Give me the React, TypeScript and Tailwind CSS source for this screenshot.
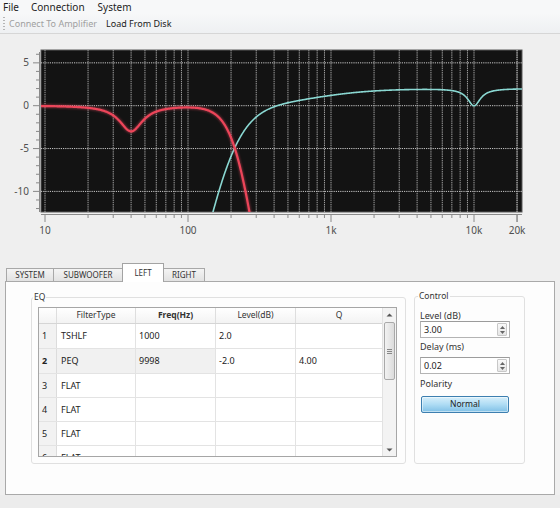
import React from 'react';

const fx = (f: number) => 45 + 143 * (Math.log10(f) - 1);
const OFF = 34;
const fy = (db: number) => 105.7 - 8.57 * db - OFF;

const peq = (f: number, f0: number, g: number, q: number) => {
  const r = f / f0 - f0 / f;
  return g / (1 + q * q * r * r);
};

const redDb = (f: number) => -20 * Math.log10(1 + Math.pow(f / 222, 6)) + peq(f, 40, -3, 2.2);
const cyanDb = (f: number) => {
  const w = f / 800;
  return -20 * Math.log10(1 + Math.pow(200 / f, 4)) + (2 * w * w) / (1 + w * w) + peq(f, 9998, -2, 4);
};

const makePath = (fn: (f: number) => number) => {
  const pts: string[] = [];
  for (let x = 41; x <= 522; x += 0.5) {
    const f = Math.pow(10, (x - 45) / 143 + 1);
    let y = fy(fn(f));
    if (y > 200) y = 200;
    pts.push(`${x.toFixed(1)},${y.toFixed(2)}`);
  }
  return 'M' + pts.join(' L');
};

function Chart() {
  const freqs: number[] = [];
  [10, 100, 1000, 10000].forEach((d) => {
    for (let m = 1; m <= 9; m++) {
      const f = m * d;
      if (f <= 20000) freqs.push(f);
    }
  });
  freqs.push(20000);
  const majors = [10, 100, 1000, 10000, 20000];
  const labels: [number, string][] = [
    [10, '10'],
    [100, '100'],
    [1000, '1k'],
    [10000, '10k'],
    [20000, '20k'],
  ];
  const ydb: number[] = [];
  for (let d = 6; d >= -12; d--) ydb.push(d);
  const top = 50 - OFF;
  const bottom = 212 - OFF;
  return (
    <svg width={560} height={229} className="block" style={{ fontFamily: "'Noto Sans', sans-serif" }}>
      <defs>
        <clipPath id="plot">
          <rect x={41} y={top} width={481} height={bottom - top} />
        </clipPath>
        <filter id="glow" x="-5%" y="-5%" width="110%" height="110%">
          <feGaussianBlur stdDeviation="0.8" />
        </filter>
      </defs>
      <rect x={41} y={top} width={481} height={bottom - top} fill="#131313" stroke="#5a5a5a" strokeWidth={1} />
      <g clipPath="url(#plot)">
        {freqs.map((f) => (
          <line
            key={f}
            x1={fx(f)}
            x2={fx(f)}
            y1={top}
            y2={bottom}
            stroke="#a2a2a2"
            strokeWidth={1}
            strokeDasharray="1.4 0.8"
          />
        ))}
        {[5, 0, -5, -10].map((d) => (
          <line key={d} x1={41} x2={522} y1={fy(d)} y2={fy(d)} stroke="#c8c8c8" strokeWidth={1} strokeDasharray="1.2 1" />
        ))}
        <path d={makePath(cyanDb)} fill="none" stroke="#8ad8d2" strokeWidth={1.6} />
        <path d={makePath(redDb)} fill="none" stroke="#ff5068" strokeWidth={3.6} opacity={0.4} filter="url(#glow)" />
        <path d={makePath(redDb)} fill="none" stroke="#ec4559" strokeWidth={2.2} />
      </g>
      {/* left axis */}
      <line x1={39.5} x2={39.5} y1={top + 2} y2={bottom} stroke="#888" strokeWidth={1} />
      {ydb.map((d) => (
        <line
          key={d}
          x1={d % 5 === 0 ? 33 : 36}
          x2={39.5}
          y1={fy(d)}
          y2={fy(d)}
          stroke="#888"
          strokeWidth={1}
        />
      ))}
      {[5, 0, -5, -10].map((d) => (
        <text key={d} x={29} y={fy(d) + 3.5} textAnchor="end" fontSize={10} fill="#505050">
          {d}
        </text>
      ))}
      {/* bottom axis */}
      <line x1={41} x2={522} y1={214.5 - OFF} y2={214.5 - OFF} stroke="#8a8a8a" strokeWidth={1} />
      {freqs.map((f) => (
        <line
          key={'t' + f}
          x1={fx(f)}
          x2={fx(f)}
          y1={214.5 - OFF}
          y2={(majors.includes(f) ? 222 : 218) - OFF}
          stroke="#8a8a8a"
          strokeWidth={1}
        />
      ))}
      {labels.map(([f, l]) => (
        <text key={l} x={fx(f)} y={233.5 - OFF} textAnchor="middle" fontSize={10} fill="#505050">
          {l}
        </text>
      ))}
    </svg>
  );
}

function Tab({ label, w, selected }: { label: string; w: string; selected?: boolean }) {
  if (selected) {
    return (
      <div
        className={`${w} relative z-10 -mb-px h-[19px] -ml-px border border-b-0 border-[#a3a3a3] bg-white flex items-center justify-center text-[8px] text-[#333]`}
      >
        {label}
      </div>
    );
  }
  return (
    <div
      className={`${w} h-[13px] -ml-px first:ml-0 border border-b-0 border-[#a8a8a8] bg-gradient-to-b from-[#f4f4f4] to-[#e2e2e2] flex items-center justify-center text-[8px] text-[#333]`}
    >
      {label}
    </div>
  );
}

const rows = [
  { n: '1', t: 'TSHLF', f: '1000', l: '2.0', q: '' },
  { n: '2', t: 'PEQ', f: '9998', l: '-2.0', q: '4.00', sel: true },
  { n: '3', t: 'FLAT', f: '', l: '', q: '' },
  { n: '4', t: 'FLAT', f: '', l: '', q: '' },
  { n: '5', t: 'FLAT', f: '', l: '', q: '' },
  { n: '6', t: 'FLAT', f: '', l: '', q: '' },
];
const rowH = ['h-[25px]', 'h-[25px]', 'h-[24px]', 'h-[24px]', 'h-[24px]', 'h-[24px]'];

function EqTable() {
  return (
    <div className="ml-[6px] mt-[9px] w-[359px] h-[150px] border border-[#a6a6a6] flex bg-white overflow-hidden">
      <div className="w-[343px] flex flex-col">
        <div className="h-[16px] flex shrink-0 bg-gradient-to-b from-white to-[#f3f3f3] border-b border-[#d5d5d5] text-[8.5px] text-[#333]">
          <div className="w-[18px] border-r border-[#dedede]" />
          <div className="w-[79px] border-r border-[#dedede] flex items-center justify-center">FilterType</div>
          <div className="w-[80px] border-r border-[#dedede] flex items-center justify-center font-bold">Freq(Hz)</div>
          <div className="w-[80px] border-r border-[#dedede] flex items-center justify-center">Level(dB)</div>
          <div className="w-[86px] flex items-center justify-center">Q</div>
        </div>
        {rows.map((r, i) => (
          <div key={r.n} className={`${rowH[i]} flex shrink-0 border-b border-[#e3e3e3] text-[9px] text-[#222]`}>
            <div
              className={`w-[18px] border-r border-[#dcdcdc] bg-[#f2f2f2] flex items-center pl-[3px] ${r.sel ? 'font-bold' : ''}`}
            >
              {r.n}
            </div>
            <div className={`w-[79px] border-r border-[#e3e3e3] flex items-center pl-[4px] ${r.sel ? 'bg-[#f1f1f1]' : ''}`}>
              {r.t}
            </div>
            <div className={`w-[80px] border-r border-[#e3e3e3] flex items-center pl-[3px] ${r.sel ? 'bg-[#f1f1f1]' : ''}`}>
              {r.f}
            </div>
            <div className="w-[80px] border-r border-[#e3e3e3] flex items-center pl-[3px]">{r.l}</div>
            <div className="w-[86px] flex items-center pl-[3px]">{r.q}</div>
          </div>
        ))}
      </div>
      <div className="w-[14px] bg-[#f3f3f3] border-l border-[#e2e2e2] flex flex-col items-center">
        <div className="h-[13px] flex items-center justify-center">
          <svg width="7" height="4" viewBox="0 0 7 4">
            <path d="M0.5 3.5 L3.5 0.5 L6.5 3.5 Z" fill="#555" />
          </svg>
        </div>
        <div className="mt-[1px] w-[11px] h-[58px] rounded-[2px] border border-[#a9a9a9] bg-gradient-to-r from-[#f2f2f2] to-[#dcdcdc] flex flex-col items-center justify-center gap-[1px]">
          <div className="w-[5px] h-px bg-[#888]" />
          <div className="w-[5px] h-px bg-[#888]" />
          <div className="w-[5px] h-px bg-[#888]" />
        </div>
        <div className="flex-1" />
        <div className="h-[13px] flex items-center justify-center">
          <svg width="7" height="4" viewBox="0 0 7 4">
            <path d="M0.5 0.5 L3.5 3.5 L6.5 0.5 Z" fill="#555" />
          </svg>
        </div>
      </div>
    </div>
  );
}

function SpinBox({ value }: { value: string }) {
  return (
    <div className="w-[90px] h-[17px] border border-[#b4b4b4] border-t-[#9c9c9c] bg-white flex items-center">
      <span className="pl-[3px] text-[9px] text-[#222] flex-1">{value}</span>
      <div className="w-[10px] h-[13px] mr-[2px] border border-[#c8c8c8] rounded-[1px] bg-gradient-to-b from-[#fafafa] to-[#e6e6e6] flex flex-col items-center justify-center gap-[2px]">
        <svg width="5" height="3" viewBox="0 0 5 3">
          <path d="M0 3 L2.5 0 L5 3 Z" fill="#666" />
        </svg>
        <svg width="5" height="3" viewBox="0 0 5 3">
          <path d="M0 0 L2.5 3 L5 0 Z" fill="#666" />
        </svg>
      </div>
    </div>
  );
}

export default function App() {
  return (
    <div className="w-[560px] h-[508px] bg-[#ececec] font-['Noto_Sans',sans-serif] overflow-hidden">
      <div className="h-[13px] bg-[#f7f8f9] flex items-center text-[10px] leading-none text-[#1e1e1e]">
        <span className="ml-[3px]">File</span>
        <span className="ml-[12px]">Connection</span>
        <span className="ml-[13px]">System</span>
      </div>
      <div className="h-[21px] bg-gradient-to-b from-[#f7f8f9] to-[#eef0f2] border-b border-[#d6d6d6] flex items-center text-[9px] leading-none">
        <div className="ml-[3px] w-[2px] h-[13px] flex flex-col justify-between">
          {[0, 1, 2, 3, 4].map((i) => (
            <div key={i} className="w-[2px] h-[1px] bg-[#b5b5b5]" />
          ))}
        </div>
        <span className="ml-[4px] text-[#a0a0a0]">Connect To Amplifier</span>
        <span className="ml-[9px] text-[#202020]">Load From Disk</span>
      </div>
      <div className="bg-[#efefef]">
        <Chart />
        <div className="h-[18px] flex items-end pl-[6px]">
          <Tab label="SYSTEM" w="w-[48px]" />
          <Tab label="SUBWOOFER" w="w-[70px]" />
          <Tab label="LEFT" w="w-[42px]" selected />
          <Tab label="RIGHT" w="w-[42px]" />
        </div>
        <div className="mx-[5px] h-[214px] border border-[#a9a9a9] bg-[#fdfdfd] flex items-start">
          <div className="relative ml-[25px] mt-[15px] w-[375px] h-[167px] border border-[#e0e0e0] rounded-[3px]">
            <span className="absolute -top-[7px] left-[1px] bg-[#fdfdfd] px-[1px] text-[8.5px] leading-[12px] text-[#333]">EQ</span>
            <EqTable />
          </div>
          <div className="relative ml-[8px] mt-[14px] w-[111px] h-[168px] border border-[#e0e0e0] rounded-[3px] flex flex-col pl-[5px] text-[9px] text-[#333]">
            <span className="absolute -top-[7px] left-[3px] bg-[#fdfdfd] px-[1px] text-[8.5px] leading-[12px]">Control</span>
            <span className="mt-[13px] leading-[11px]">Level (dB)</span>
            <div className="mt-[0px]">
              <SpinBox value="3.00" />
            </div>
            <span className="mt-[3px] leading-[11px]">Delay (ms)</span>
            <div className="mt-[5px]">
              <SpinBox value="0.02" />
            </div>
            <span className="mt-[4px] leading-[11px]">Polarity</span>
            <div className="mt-[7px] ml-[1px] w-[88px] h-[17px] rounded-[2px] border border-[#3d7fb0] bg-gradient-to-b from-[#d8effb] via-[#aedcf4] to-[#7fc0e6] flex items-center justify-center text-[8.5px] text-[#222] shadow-[inset_0_0_0_1px_rgba(255,255,255,0.5)]">
              Normal
            </div>
          </div>
        </div>
      </div>
    </div>
  );
}
